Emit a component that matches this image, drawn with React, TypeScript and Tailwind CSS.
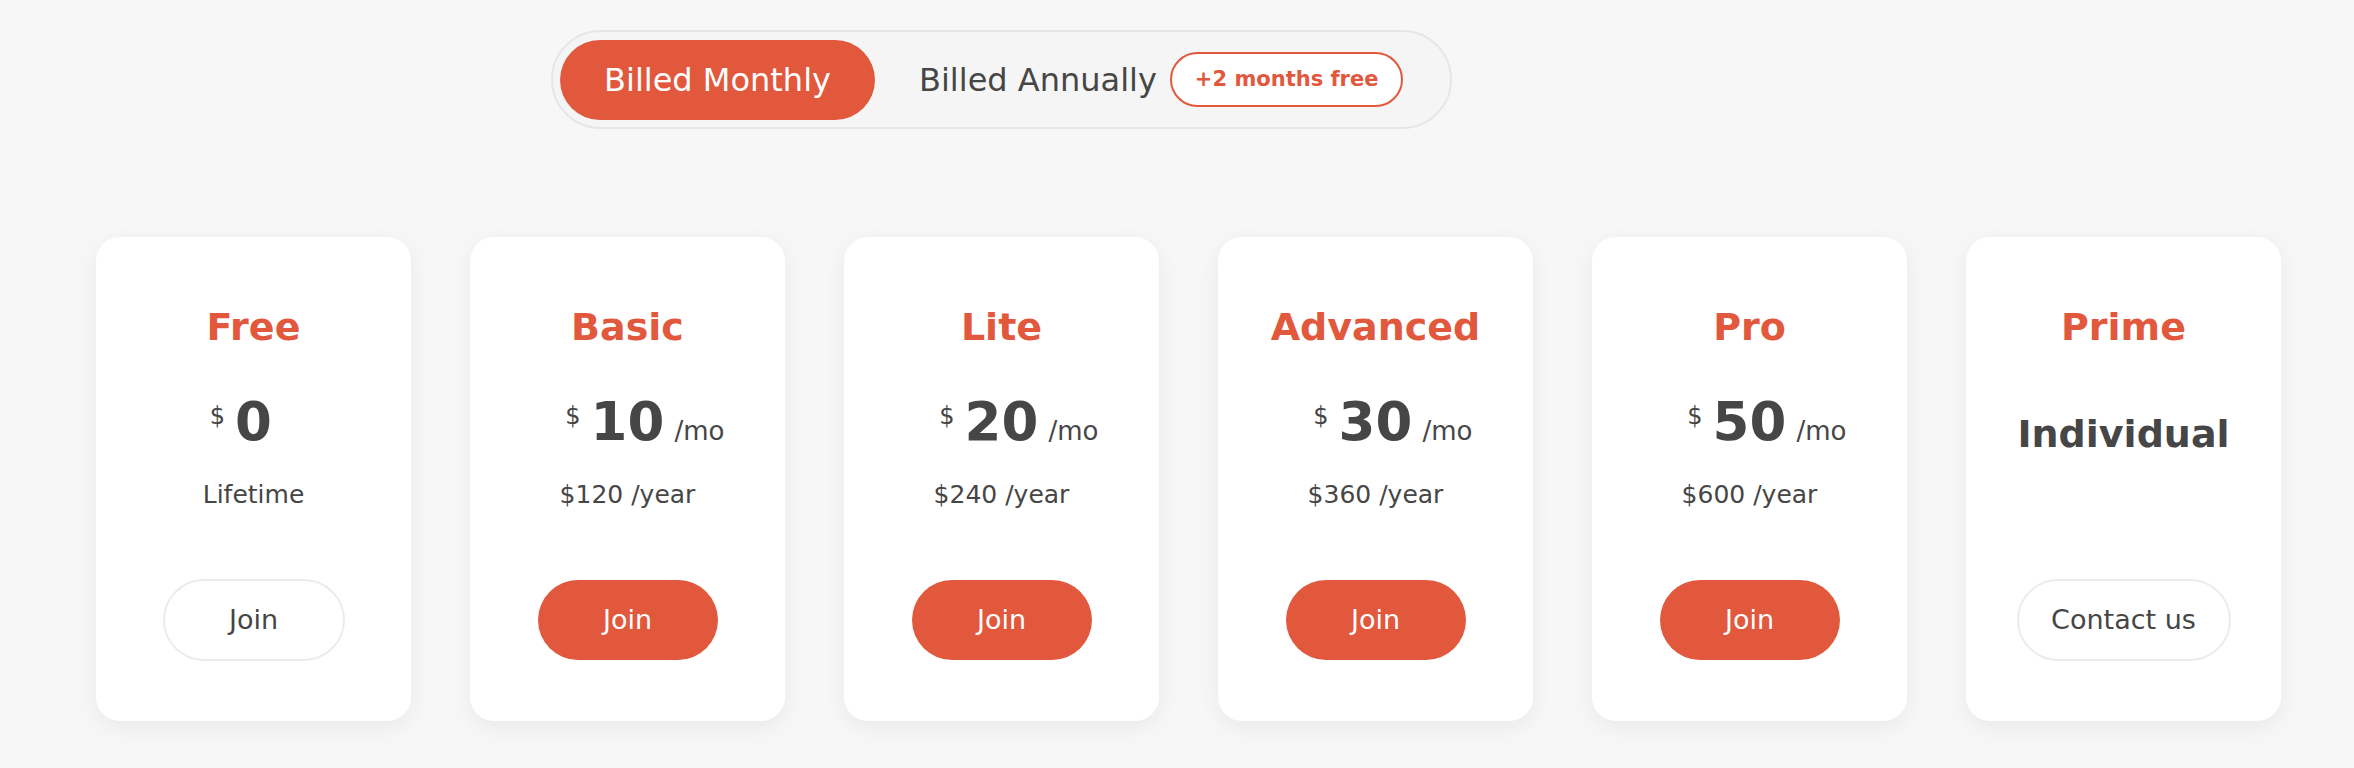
import React from 'react';

const FONT = { fontFamily: '"DejaVu Sans", "Liberation Sans", sans-serif' };

type Plan = {
  name: string;
  price?: string;
  perMonth?: boolean;
  sub?: string;
  custom?: string;
  cta: string;
  filled: boolean;
};

const PLANS: Plan[] = [
  { name: 'Free', price: '0', sub: 'Lifetime', cta: 'Join', filled: false },
  { name: 'Basic', price: '10', perMonth: true, sub: '$120 /year', cta: 'Join', filled: true },
  { name: 'Lite', price: '20', perMonth: true, sub: '$240 /year', cta: 'Join', filled: true },
  { name: 'Advanced', price: '30', perMonth: true, sub: '$360 /year', cta: 'Join', filled: true },
  { name: 'Pro', price: '50', perMonth: true, sub: '$600 /year', cta: 'Join', filled: true },
  { name: 'Prime', custom: 'Individual', cta: 'Contact us', filled: false },
];

function PlanCard({ plan }: { plan: Plan }) {
  return (
    <div className="w-[315px] h-[484px] shrink-0 rounded-[24px] bg-white shadow-[0_6px_24px_rgba(0,0,0,0.06)] flex flex-col items-center pt-[66px]">
      <div className="h-[48px] leading-[48px] text-[38px] font-bold text-[#e1583d]">{plan.name}</div>

      {plan.custom ? (
        <div className="mt-[41px] h-[60px] flex items-end">
          <div className="text-[38px] leading-[36px] font-bold text-[#464646]">{plan.custom}</div>
        </div>
      ) : (
        <div className="mt-[41px] h-[60px] w-full grid grid-cols-[1fr_auto_1fr] items-baseline text-[#464646]">
          <span className="justify-self-end self-start mt-[12px] mr-[10px] text-[24px] leading-[24px]">$</span>
          <span className="text-[53px] leading-[60px] font-bold">{plan.price}</span>
          <span className="justify-self-start ml-[10px] text-[26px]">{plan.perMonth ? '/mo' : ''}</span>
        </div>
      )}

      <div className="mt-[26px] h-[34px] leading-[34px] text-[25px] text-[#464646]">{plan.sub ?? ''}</div>

      <button
        className={
          plan.filled
            ? 'mt-[68px] h-[80px] w-[180px] rounded-full bg-[#e1583d] text-white text-[27px]'
            : 'mt-[67px] h-[82px] rounded-full border-2 border-[#ececec] bg-white text-[#464646] text-[27px] ' +
              (plan.cta === 'Join' ? 'w-[182px]' : 'w-[214px]')
        }
      >
        {plan.cta}
      </button>
    </div>
  );
}

export default function App() {
  return (
    <div style={FONT} className="min-h-[768px] bg-[#f7f7f7] pl-[96px] pt-[30px]">
      <div className="ml-[455px] w-[901px] h-[99px] rounded-full border-2 border-[#e6e6e6] bg-[#f5f5f5] flex items-center pl-[7px]">
        <button className="w-[315px] h-[80px] rounded-full bg-[#e1583d] text-white text-[32px]">Billed Monthly</button>
        <span className="ml-[44px] text-[32px] text-[#464646]">Billed Annually</span>
        <span className="ml-[13px] h-[55px] px-[23px] rounded-full border-2 border-[#e1583d] bg-white flex items-center text-[21px] font-bold text-[#e1583d]">
          +2 months free
        </span>
      </div>

      <div className="mt-[108px] flex gap-[59px]">
        {PLANS.map((p) => (
          <PlanCard key={p.name} plan={p} />
        ))}
      </div>
    </div>
  );
}
